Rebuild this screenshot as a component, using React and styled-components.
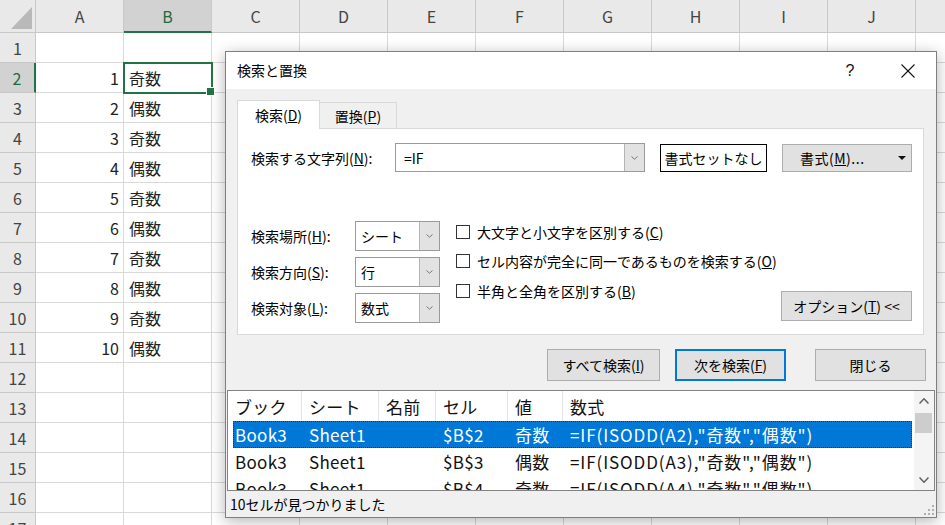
import React from 'react';
import styled, { createGlobalStyle } from 'styled-components';

const GlobalStyle = createGlobalStyle`
  html, body {
    margin: 0;
    padding: 0;
    background: #fff;
  }
  body {
    width: 945px;
    height: 525px;
    overflow: hidden;
    font-family: "Noto Sans CJK JP", "Noto Sans", sans-serif;
  }
  * {
    box-sizing: border-box;
  }
`;

const JP = `"Noto Sans CJK JP", "Noto Sans", sans-serif`;

// ---- spreadsheet ----
const Screen = styled.div`
  position: relative;
  width: 945px;
  height: 525px;
  overflow: hidden;
`;

const SheetGrid = styled.div`
  display: grid;
  grid-template-columns: 36px repeat(11, 88px);
  grid-template-rows: 33px;
  grid-auto-rows: 30px;
  font-family: ${JP};
  font-size: 16px;
`;

const Corner = styled.div`
  position: relative;
  background: #e9e9e9;
  border-right: 1px solid #c8c8c8;
  border-bottom: 1px solid #c8c8c8;
  &::after {
    content: '';
    position: absolute;
    right: 3px;
    bottom: 3px;
    width: 21px;
    height: 22px;
    background: #b9b9b9;
    clip-path: polygon(100% 0, 100% 100%, 0 100%);
  }
`;

const ColHeader = styled.div`
  display: flex;
  align-items: center;
  justify-content: center;
  background: ${p => (p.$active ? '#d2d2d2' : '#e9e9e9')};
  color: ${p => (p.$active ? '#1d6b3e' : '#444')};
  border-right: 1px solid #c8c8c8;
  border-bottom: ${p => (p.$active ? '2px solid #217346' : '1px solid #c8c8c8')};
  padding-top: ${p => (p.$active ? '1px' : '0')};
`;

const RowHeader = styled.div`
  display: flex;
  align-items: center;
  justify-content: center;
  background: ${p => (p.$active ? '#d2d2d2' : '#e9e9e9')};
  color: ${p => (p.$active ? '#1d6b3e' : '#444')};
  border-right: ${p => (p.$active ? '2px solid #217346' : '1px solid #c8c8c8')};
  border-bottom: 1px solid #c8c8c8;
`;

const Cell = styled.div`
  position: relative;
  display: flex;
  align-items: center;
  justify-content: ${p => (p.$right ? 'flex-end' : 'flex-start')};
  padding: 0 4px 0 5px;
  color: #222;
  border-right: 1px solid #d9d9d9;
  border-bottom: 1px solid #d9d9d9;
  white-space: nowrap;
  ${p =>
    p.$selected &&
    `
    z-index: 2;
    outline: 2px solid #217346;
    outline-offset: -1px;
    &::after {
      content: '';
      position: absolute;
      right: -4px;
      bottom: -4px;
      width: 7px;
      height: 7px;
      background: #217346;
      border: 1px solid #fff;
    }
  `}
`;

// ---- dialog ----
const Dialog = styled.div`
  position: absolute;
  left: 225px;
  top: 51px;
  width: 712px;
  height: 467px;
  background: #f0f0f0;
  border: 1px solid #7f7f7f;
  box-shadow: 0 3px 14px rgba(0, 0, 0, 0.3);
  display: flex;
  flex-direction: column;
  font-family: ${JP};
  font-size: 14px;
  color: #000;
`;

const TitleBar = styled.div`
  height: 37px;
  flex: none;
  background: #fff;
  display: flex;
  align-items: center;
  padding: 0 5px 0 11px;
`;

const Title = styled.div`
  flex: 1;
  padding-bottom: 2px;
`;

const HelpBtn = styled.div`
  width: 30px;
  margin-right: 20px;
  text-align: center;
  font-size: 16px;
  font-family: "Liberation Sans", sans-serif;
  color: #111;
`;

const CloseBtn = styled.div`
  width: 46px;
  height: 30px;
  display: flex;
  align-items: center;
  justify-content: center;
`;

const Body = styled.div`
  padding: 11px 10px 0 11px;
  display: flex;
  flex-direction: column;
`;

const TabRow = styled.div`
  display: flex;
  align-items: flex-end;
  height: 28px;
`;

const Tab = styled.div`
  position: relative;
  z-index: 1;
  width: ${p => p.$w}px;
  height: ${p => (p.$active ? 29 : 26)}px;
  margin-bottom: ${p => (p.$active ? -1 : 0)}px;
  display: flex;
  align-items: center;
  justify-content: center;
  padding-bottom: ${p => (p.$active ? 1 : 0)}px;
  background: ${p => (p.$active ? '#fff' : '#f0f0f0')};
  border: 1px solid #d9d9d9;
  border-bottom: none;
  border-left: ${p => (p.$active ? '1px solid #d9d9d9' : 'none')};
`;

const Panel = styled.div`
  width: 687px;
  height: 207px;
  background: #fff;
  border: 1px solid #d9d9d9;
  padding: 14px 11px 0 13px;
  display: flex;
  flex-direction: column;
`;

const FindRow = styled.div`
  display: flex;
  align-items: center;
  height: 29px;
`;

const FieldLabel = styled.div`
  width: ${p => p.$w}px;
  flex: none;
  white-space: nowrap;
`;

const Combo = styled.div`
  width: ${p => p.$w}px;
  height: ${p => p.$h}px;
  display: flex;
  border: 1px solid #9a9a9a;
  background: #fff;
`;

const ComboValue = styled.div`
  flex: 1;
  display: flex;
  align-items: center;
  padding-left: ${p => p.$pad}px;
`;

const ComboArrow = styled.div`
  width: 20px;
  flex: none;
  display: flex;
  align-items: center;
  justify-content: center;
  background: #e2e2e2;
  border-left: 1px solid #b4b4b4;
`;

const NoFormatBox = styled.div`
  margin-left: 15px;
  width: 107px;
  height: 28px;
  display: flex;
  align-items: center;
  justify-content: center;
  border: 1px solid #000;
  background: #fff;
`;

const Button = styled.div`
  width: ${p => p.$w}px;
  height: ${p => p.$h || 30}px;
  margin-left: ${p => p.$ml || 0}px;
  display: flex;
  align-items: center;
  justify-content: center;
  background: #e1e1e1;
  border: ${p => (p.$primary ? '2px solid #0078d7' : '1px solid #adadad')};
  white-space: nowrap;
`;

const FormatButton = styled(Button)`
  justify-content: space-between;
  padding: 0 5px 0 17px;
  letter-spacing: 0.5px;
`;

const OptionsArea = styled.div`
  margin-top: 45px;
  display: flex;
  align-items: flex-start;
`;

const SelectColumn = styled.div`
  padding-top: 4px;
  display: grid;
  grid-auto-rows: 30px;
  row-gap: 6px;
`;

const SelectRow = styled.div`
  display: flex;
  align-items: center;
`;

const CheckColumn = styled.div`
  margin-left: 16px;
  display: grid;
  grid-auto-rows: 29.5px;
`;

const CheckRow = styled.div`
  display: flex;
  align-items: center;
  white-space: nowrap;
`;

const CheckBox = styled.span`
  width: 14px;
  height: 14px;
  flex: none;
  border: 1px solid #333;
  background: #fff;
  margin-right: 7px;
`;

const OptionsButton = styled(Button)`
  margin-left: auto;
  align-self: flex-end;
  margin-bottom: 2px;
`;

const ButtonRow = styled.div`
  margin-top: 14px;
  display: flex;
  justify-content: flex-end;
`;

const Results = styled.div`
  margin: 9px 1px 0 1px;
  height: 101px;
  flex: none;
  display: flex;
  background: #fff;
  border: 1px solid #828282;
  font-size: 17px;
  overflow: hidden;
`;

const ResultRows = styled.div`
  flex: 1;
  padding-left: 5px;
  overflow: hidden;
`;

const ResultRow = styled.div`
  display: grid;
  grid-template-columns: 69px 77px 57px 72px 55px 1fr;
  height: ${p => (p.$head ? 30 : 27)}px;
  align-items: center;
  white-space: nowrap;
  background: ${p => (p.$selected ? '#0078d7' : 'transparent')};
  color: ${p => (p.$selected ? '#fff' : '#111')};
  outline: ${p => (p.$selected ? '1px dotted #333' : 'none')};
  outline-offset: -1px;
`;

const ResultCell = styled.div`
  height: 100%;
  display: flex;
  align-items: center;
  padding-left: ${p => (p.$first ? 2 : 7)}px;
  letter-spacing: ${p => (p.$wide ? 0.9 : 0.3)}px;
  border-right: ${p => (p.$head ? '1px solid #e5e5e5' : 'none')};
  overflow: hidden;
`;

const ScrollBar = styled.div`
  width: 20px;
  margin-left: 2px;
  flex: none;
  display: flex;
  flex-direction: column;
  background: #f4f4f4;
`;

const ScrollArrow = styled.div`
  height: 20px;
  display: flex;
  align-items: center;
  justify-content: center;
`;

const ScrollThumb = styled.div`
  margin: 2px 2px 0 1px;
  height: 20px;
  background: #cdcdcd;
`;

const ScrollTrack = styled.div`
  flex: 1;
`;

const StatusBar = styled.div`
  flex: 1;
  display: flex;
  align-items: center;
  justify-content: space-between;
  padding: 0 1px 0 4px;
`;

const Grip = styled.svg`
  align-self: flex-end;
  margin-bottom: 1px;
`;

const Chevron = ({ up, w = 8, h = 5, color = '#707070', sw = 1.2 }) => (
  <svg width={w} height={h} viewBox={`0 0 ${w} ${h}`}>
    <polyline
      points={up ? `0.5,${h - 0.5} ${w / 2},0.8 ${w - 0.5},${h - 0.5}` : `0.5,0.5 ${w / 2},${h - 0.8} ${w - 0.5},0.5`}
      fill="none"
      stroke={color}
      strokeWidth={sw}
    />
  </svg>
);

const CloseIcon = () => (
  <svg width="14" height="14" viewBox="0 0 14 14">
    <line x1="0.5" y1="0.5" x2="13.5" y2="13.5" stroke="#111" strokeWidth="1.1" />
    <line x1="13.5" y1="0.5" x2="0.5" y2="13.5" stroke="#111" strokeWidth="1.1" />
  </svg>
);

const DownTriangle = () => (
  <svg width="8" height="4" viewBox="0 0 8 4">
    <polygon points="0,0 8,0 4,4" fill="#111" />
  </svg>
);

const columns = ['A', 'B', 'C', 'D', 'E', 'F', 'G', 'H', 'I', 'J', 'K'];

const cellValue = (row, col) => {
  if (row < 2 || row > 11) return '';
  const n = row - 1;
  if (col === 'A') return String(n);
  if (col === 'B') return n % 2 === 1 ? '奇数' : '偶数';
  return '';
};

const results = [
  { cell: '$B$2', value: '奇数', formula: '=IF(ISODD(A2),"奇数","偶数")' },
  { cell: '$B$3', value: '偶数', formula: '=IF(ISODD(A3),"奇数","偶数")' },
  { cell: '$B$4', value: '奇数', formula: '=IF(ISODD(A4),"奇数","偶数")' },
];

const Sheet = () => {
  const rows = [];
  for (let r = 1; r <= 17; r++) rows.push(r);
  return (
    <SheetGrid>
      <Corner />
      {columns.map(c => (
        <ColHeader key={c} $active={c === 'B'}>{c}</ColHeader>
      ))}
      {rows.map(r => (
        <React.Fragment key={r}>
          <RowHeader $active={r === 2}>{r}</RowHeader>
          {columns.map(c => (
            <Cell key={c} $right={c === 'A'} $selected={r === 2 && c === 'B'}>
              {cellValue(r, c)}
            </Cell>
          ))}
        </React.Fragment>
      ))}
    </SheetGrid>
  );
};

const SelectField = ({ label, value }) => (
  <SelectRow>
    <FieldLabel $w={104}>{label}</FieldLabel>
    <Combo $w={85} $h={30}>
      <ComboValue $pad={5}>{value}</ComboValue>
      <ComboArrow>
        <Chevron w={7} h={4} sw={1} color="#777" />
      </ComboArrow>
    </Combo>
  </SelectRow>
);

const FindDialog = () => (
  <Dialog>
    <TitleBar>
      <Title>検索と置換</Title>
      <HelpBtn>?</HelpBtn>
      <CloseBtn>
        <CloseIcon />
      </CloseBtn>
    </TitleBar>
    <Body>
      <TabRow>
        <Tab $active $w={83}>検索(<u>D</u>)</Tab>
        <Tab $w={77}>置換(<u>P</u>)</Tab>
      </TabRow>
      <Panel>
        <FindRow>
          <FieldLabel $w={144}>検索する文字列(<u>N</u>):</FieldLabel>
          <Combo $w={250} $h={29}>
            <ComboValue $pad={8}>=IF</ComboValue>
            <ComboArrow>
              <Chevron w={7} h={4} sw={1} color="#777" />
            </ComboArrow>
          </Combo>
          <NoFormatBox>書式セットなし</NoFormatBox>
          <FormatButton $w={130} $h={28} $ml={15}>
            <span>書式(<u>M</u>)...</span>
            <DownTriangle />
          </FormatButton>
        </FindRow>
        <OptionsArea>
          <SelectColumn>
            <SelectField label={<>検索場所(<u>H</u>):</>} value="シート" />
            <SelectField label={<>検索方向(<u>S</u>):</>} value="行" />
            <SelectField label={<>検索対象(<u>L</u>):</>} value="数式" />
          </SelectColumn>
          <CheckColumn>
            <CheckRow><CheckBox />大文字と小文字を区別する(<u>C</u>)</CheckRow>
            <CheckRow><CheckBox />セル内容が完全に同一であるものを検索する(<u>O</u>)</CheckRow>
            <CheckRow><CheckBox />半角と全角を区別する(<u>B</u>)</CheckRow>
          </CheckColumn>
          <OptionsButton $w={131}>オプション(<u>T</u>) &lt;&lt;</OptionsButton>
        </OptionsArea>
      </Panel>
      <ButtonRow>
        <Button $w={113} $h={32}>すべて検索(<u>I</u>)</Button>
        <Button $w={111} $h={32} $ml={15} $primary>次を検索(<u>F</u>)</Button>
        <Button $w={111} $h={32} $ml={29}>閉じる</Button>
      </ButtonRow>
    </Body>
    <Results>
      <ResultRows>
        <ResultRow $head>
          {['ブック', 'シート', '名前', 'セル', '値', '数式'].map((h, i) => (
            <ResultCell key={h} $head={i < 5} $first={i === 0}>{h}</ResultCell>
          ))}
        </ResultRow>
        {results.map((r, i) => (
          <ResultRow key={r.cell} $selected={i === 0}>
            <ResultCell $first>Book3</ResultCell>
            <ResultCell>Sheet1</ResultCell>
            <ResultCell />
            <ResultCell>{r.cell}</ResultCell>
            <ResultCell>{r.value}</ResultCell>
            <ResultCell $wide>{r.formula}</ResultCell>
          </ResultRow>
        ))}
      </ResultRows>
      <ScrollBar>
        <ScrollArrow>
          <Chevron up w={10} h={6} sw={1.5} color="#606060" />
        </ScrollArrow>
        <ScrollThumb />
        <ScrollTrack />
        <ScrollArrow>
          <Chevron w={10} h={6} sw={1.5} color="#606060" />
        </ScrollArrow>
      </ScrollBar>
    </Results>
    <StatusBar>
      <span>10セルが見つかりました</span>
      <Grip width="12" height="12" viewBox="0 0 12 12">
        {[[10, 2], [10, 6], [6, 6], [10, 10], [6, 10], [2, 10]].map(([x, y]) => (
          <rect key={`${x}-${y}`} x={x - 1} y={y - 1} width="2" height="2" fill="#b0b0b0" />
        ))}
      </Grip>
    </StatusBar>
  </Dialog>
);

export default function App() {
  return (
    <Screen>
      <GlobalStyle />
      <Sheet />
      <FindDialog />
    </Screen>
  );
}
